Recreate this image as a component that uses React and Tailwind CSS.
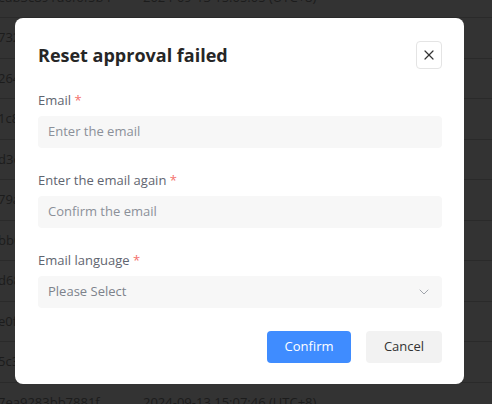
import React from 'react';
import { X, ChevronDown } from 'lucide-react';

const rows = [
    ['eab3c891d6f6f5b4', '2024-09-13 15:05:05 (UTC+8)'],
    ['7321a8c0d9e4f2b6', '2024-09-13 15:05:12 (UTC+8)'],
    ['264bf1a9c3e07d58', '2024-09-13 15:05:30 (UTC+8)'],
    ['1c8e2d47fa093b61', '2024-09-13 15:05:48 (UTC+8)'],
    ['d3c09b7e51a2f486', '2024-09-13 15:06:02 (UTC+8)'],
    ['79a4e1b0c8d25f3e', '2024-09-13 15:06:15 (UTC+8)'],
    ['bb07f3c92e1d84a6', '2024-09-13 15:06:33 (UTC+8)'],
    ['d68c1e4a07b9f235', '2024-09-13 15:06:51 (UTC+8)'],
    ['e0f59a2d3c71b846', '2024-09-13 15:07:09 (UTC+8)'],
    ['5c3a8e1f60d2b97e', '2024-09-13 15:07:27 (UTC+8)'],
    ['7ea9283bb7881f', '2024-09-13 15:07:46 (UTC+8)'],
];

const Field = ({ label, children, className = '' }) => (
    <div className={className}>
        <div className="h-5 leading-5 text-[13px] text-[#5f6570]">
            {label} <span className="text-[#f4716c]">*</span>
        </div>
        <div className="mt-1.5">{children}</div>
    </div>
);

const App = () => {
    return (
        <div
            className="relative w-[492px] h-[404px] overflow-hidden bg-[#333333]"
            style={{ fontFamily: '"Open Sans", "Noto Sans", sans-serif' }}
        >
            {/* Table behind the mask */}
            <div className="-mt-[22.5px]">
                {rows.map(([id, time], i) => (
                    <div
                        key={i}
                        className="h-[40.5px] flex items-center border-b border-[#2a2a2a] text-[13px] text-[#1c1c1c]"
                    >
                        <span className="w-[145px] -ml-[2px] overflow-hidden whitespace-nowrap">{id}</span>
                        <span>{time}</span>
                    </div>
                ))}
            </div>

            {/* Dialog */}
            <div className="absolute left-[15px] top-[18px] w-[449px] h-[366px] bg-white rounded-lg pl-[23px] pr-[22px] pt-[23px]">
                <div className="flex items-start justify-between">
                    <h2 className="h-7 leading-7 text-[18px] font-bold text-[#262626]">Reset approval failed</h2>
                    <button className="w-[26px] h-[28px] flex items-center justify-center border border-[#e4e4e4] rounded text-[#333]">
                        <X size={16} strokeWidth={1.8} />
                    </button>
                </div>

                <Field label="Email" className="mt-[21px]">
                    <div className="h-8 rounded bg-[#f7f7f7] px-2.5 flex items-center text-[13px] text-[#8b9099]">
                        Enter the email
                    </div>
                </Field>

                <Field label="Enter the email again" className="mt-[22px]">
                    <div className="h-8 rounded bg-[#f7f7f7] px-2.5 flex items-center text-[13px] text-[#8b9099]">
                        Confirm the email
                    </div>
                </Field>

                <Field label="Email language" className="mt-[22px]">
                    <div className="h-8 rounded bg-[#f7f7f7] pl-2.5 pr-[10px] flex items-center justify-between text-[13px] text-[#7d828b]">
                        <span>Please Select</span>
                        <ChevronDown size={16} strokeWidth={1.4} className="text-[#9a9ea6]" />
                    </div>
                </Field>

                <div className="mt-[23px] flex justify-end gap-[15px]">
                    <button className="w-[84px] h-8 rounded bg-[#3f8cff] text-white text-[13px]">Confirm</button>
                    <button className="w-[76px] h-8 rounded bg-[#f2f2f2] text-[#333] text-[13px]">Cancel</button>
                </div>
            </div>
        </div>
    );
};

export default App;
